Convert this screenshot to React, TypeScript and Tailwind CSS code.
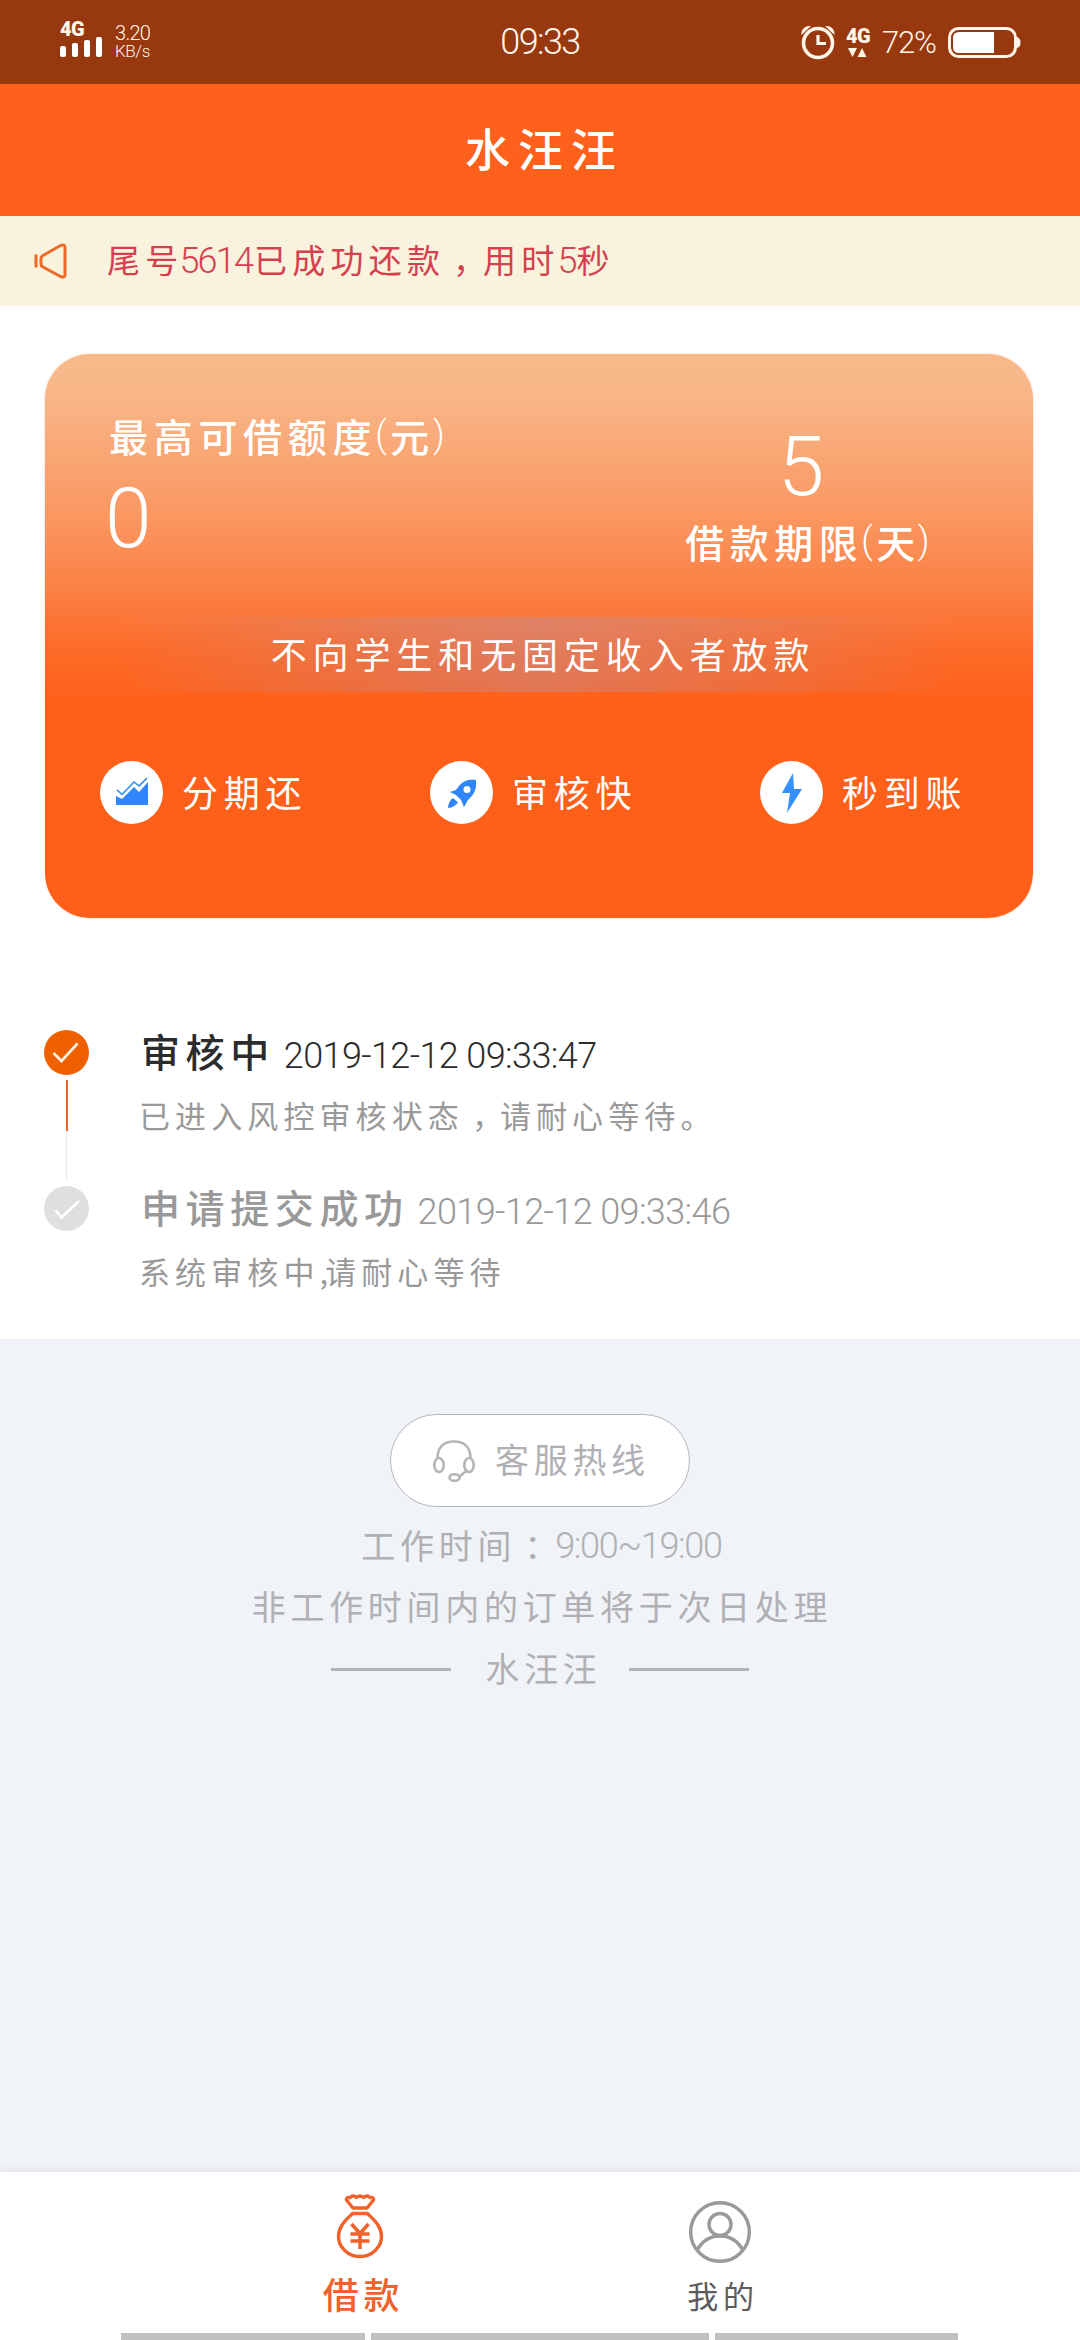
import React from "react";
import clsx from "clsx";

const steps = [
	{
		title: "审核中",
		time: "2019-12-12 09:33:47",
		active: true,
	},
	{
		title: "申请提交成功",
		time: "2019-12-12 09:33:46",
		active: false,
	},
];

// latin text and digits are thinner and narrower than the chinese around them
function Num({ className, children }: { className?: string; children: React.ReactNode }) {
	return (
		<span className={clsx("font-[Roboto,'Liberation_Sans',sans-serif] whitespace-pre", className)}>
			{children}
		</span>
	);
}

// full width punctuation sits in the middle of its cell
function Mark({ children }: { children: React.ReactNode }) {
	return <span className="pl-2 tracking-[-3px]">{children}</span>;
}

function StatusBar() {
	return (
		<div className="flex h-[84px] bg-[#97380f] text-[#fff6ea]">
			<div className="flex w-[400px] pl-[60px] pt-[21px]">
				<div className="w-[55px]">
					<div className="h-4 font-[Roboto,sans-serif] text-[20px] leading-4 font-black tracking-[-0.5px]">4G</div>
					<div className="flex items-end gap-[6px] h-5">
						<i className="w-[6px] h-[11px] rounded-[2px] bg-white" />
						<i className="w-[6px] h-[14px] rounded-[2px] bg-white" />
						<i className="w-[6px] h-[17px] rounded-[2px] bg-white" />
						<i className="w-[6px] h-[20px] rounded-[2px] bg-white" />
					</div>
				</div>
				<div className="flex flex-col pt-[3px]">
					<Num className="text-[20px] leading-[18px] font-light tracking-[-0.7px]">3.20</Num>
					<Num className="text-[17px] leading-[19px] font-light tracking-[-0.4px]">KB/s</Num>
				</div>
			</div>
			<div className="flex w-[280px] items-center justify-center">
				<Num className="text-[36px] leading-none font-light tracking-[-1.600px]">09:33</Num>
			</div>
			<div className="flex flex-1 items-center pl-[120px]">
				<svg className="w-[36px] h-[36px]" viewBox="0 0 36 36" fill="none" stroke="currentColor">
					<circle cx="18" cy="19" r="14.5" strokeWidth="3.6" />
					<path d="M18 11v8.5h8" strokeWidth="3.2" />
					<path d="M1.500 11C1 5 5 1.500 11 2L1.500 11zM34.500 11C35 5 31 1.500 25 2l9.500 9z" fill="currentColor" stroke="none" />
				</svg>
				<div className="ml-[10px] flex w-[36px] flex-col">
					<span className="h-[18px] font-[Roboto,sans-serif] text-[20px] leading-[18px] font-black tracking-[-0.5px]">4G</span>
					<svg className="ml-[2px] mt-[3px] w-[19px] h-[9px]" viewBox="0 0 19 9" fill="currentColor">
						<path d="M0 0h9L4.500 9zM9.500 9h9L14 0z" />
					</svg>
				</div>
				<Num className="w-[66px] text-[31px] leading-none font-light tracking-[-1.200px]">72%</Num>
				<svg className="w-[73px] h-[32px]" viewBox="0 0 73 32" fill="none">
					<rect x="1.500" y="2.500" width="66" height="28" rx="9" stroke="currentColor" strokeWidth="3" />
					<path d="M11 6h35v21H11q-6 0-6-6v-9q0-6 6-6z" fill="white" />
					<path d="M69 11q3.500 1 3.500 5.500T69 22z" fill="currentColor" />
				</svg>
			</div>
		</div>
	);
}

function Feature({ icon, label }: { icon: React.ReactNode; label: string }) {
	return (
		<div className="flex w-[330px] shrink-0 items-center pl-[55px]">
			<div className="flex w-[63px] h-[63px] items-center justify-center rounded-full bg-white">{icon}</div>
			<span className="ml-[19px] pb-1 text-[36px] leading-none tracking-[5.7px] whitespace-nowrap">{label}</span>
		</div>
	);
}

function LoanCard() {
	return (
		<div className="ml-[45px] mt-[48px] flex w-[988px] h-[564px] flex-col rounded-[45px] bg-[linear-gradient(180deg,#f8ba8b_0px,#f8b586_45px,#fa9660_165px,#fb8145_235px,#fd6b28_295px,#fe601a_350px,#fe601a_100%)] text-white shadow-[0_0_2px_#fbc6a6]">
			<div className="flex h-[263px]">
				<div className="w-[595px] pl-[64px] pt-[58px]">
					<div className="flex h-[46px] items-center text-[39px] leading-none font-medium tracking-[5.700px]">
						最高可借额度<Num className="-ml-[2px] w-[15px] text-[36px] font-light">(</Num>元<Num className="-ml-[2px] text-[36px] font-light">)</Num>
					</div>
					<Num className="mt-[21px] -ml-[4px] block text-[84px] leading-[80px] font-[350]">0</Num>
				</div>
				<div className="flex w-[340px] flex-col items-center pt-[73px]">
					<Num className="-ml-[18px] text-[84px] leading-[80px] font-[350]">5</Num>
					<div className="mt-[12px] flex h-[44px] items-center text-[39px] leading-none font-medium tracking-[5.500px]">
						借款期限<Num className="-ml-[2px] w-[15px] text-[36px] font-light">(</Num>天<Num className="-ml-[3px] w-[17px] text-[36px] font-light">)</Num>
					</div>
				</div>
			</div>
			<div className="mx-[75px] flex h-[75px] items-center justify-center bg-[linear-gradient(90deg,transparent,rgba(170,155,192,0.35)_50%,transparent)]">
				<span className="pl-[8px] pb-1 text-[36px] leading-none tracking-[5.900px] whitespace-nowrap">不向学生和无固定收入者放款</span>
			</div>
			<div className="mt-[69px] flex">
				<Feature
					label="分期还"
					icon={
						<svg className="mb-[3px] w-[34px] h-[30px]" viewBox="0 0 34 30" fill="#2f86fb">
							<path d="M1 20l6 3L19 11l5 5 9-10v23H1z" />
							<path d="M2 14l5 4.500L19 6l5 4L32 2" fill="none" stroke="#2f86fb" strokeWidth="1.600" />
						</svg>
					}
				/>
				<Feature
					label="审核快"
					icon={
						<svg className="mt-[3px] w-[30px] h-[30px]" viewBox="0 0 30 30">
							<path
								fill="#2f86fb"
								fillRule="evenodd"
								d="M29 1C22 0 17 1 12 7L9 11 3 13l6 3 5 5 3 7 4-7C27 16 30 10 29 1zM20 7a3.500 3.500 0 1 1 0 7 3.500 3.500 0 0 1 0-7z"
							/>
							<path fill="#2f86fb" d="M6 19l5 4.500C9 26 5 29 1 29c0-4 2-8 5-10z" />
						</svg>
					}
				/>
				<Feature
					label="秒到账"
					icon={
						<svg className="w-[20px] h-[40px]" viewBox="0 0 20 40" fill="#3490fd">
							<path d="M11 0L0 20h8L5 40l15-24h-8z" />
						</svg>
					}
				/>
			</div>
		</div>
	);
}

function StepIcon({ active }: { active: boolean }) {
	return (
		<svg className="w-[45px] h-[45px]" viewBox="0 0 45 45" fill="none">
			<circle cx="22.500" cy="22.500" r="22.500" fill={active ? "#ee6000" : "#dfdfdf"} />
			<path
				d={active ? "M9.500 23l8 8L33.500 13.500" : "M11.500 24l6 7.500L35 15"}
				stroke={active ? "#fff0e0" : "#fff"}
				strokeWidth="2.600"
			/>
		</svg>
	);
}

function Progress() {
	return (
		<div className="mt-[112px] flex h-[309px] pl-[44px]">
			<div className="flex w-[45px] flex-col items-center">
				<StepIcon active />
				<div className="mt-[5px] w-[2px] h-[51px] bg-[#ea5f2a]" />
				<div className="mb-[5px] w-px h-[50px] bg-[#eaeaea]" />
				<StepIcon active={false} />
			</div>
			<div className="ml-[50px]">
				{steps.map((step) => (
					<div key={step.title} className={clsx("h-[156px]", step.active ? "text-[#2c2c2c]" : "text-[#999]")}>
						<div className="flex h-[46px] items-center whitespace-nowrap">
							<span className="ml-[2px] pb-[5px] text-[39px] leading-none font-medium tracking-[5.600px]">{step.title}</span>
							<Num className="ml-[9px] mt-[5px] text-[36px] leading-none font-light tracking-[-0.600px]">{step.time}</Num>
						</div>
						<div className="mt-[16px] flex h-[44px] items-center text-[31px] leading-none tracking-[5.100px] text-[#999] whitespace-nowrap">
							{step.active ? <>已进入风控审核状态<Mark>，</Mark>请耐心等待。</> : <>系统审核中<span className="tracking-[-3px]">,</span>请耐心等待</>}
						</div>
					</div>
				))}
			</div>
		</div>
	);
}

function Service() {
	return (
		<div className="flex flex-1 flex-col items-center border-t border-[#ececef] bg-[#f0f3f7] pt-[74px] text-[34px] leading-none tracking-[4.700px] text-[#b0b0b4]">
			<div className="flex w-[300px] h-[93px] items-center rounded-full border border-[#b4b4ba] bg-white pl-[42px]">
				<svg className="w-[42px] h-[42px]" viewBox="0 0 42 42" fill="none" stroke="#b5b5b5" strokeWidth="2.600">
					<path d="M4.500 18C4.500 7 11 1.500 21 1.500S37.500 7 37.500 18" />
					<ellipse cx="6" cy="25" rx="4.700" ry="7" />
					<ellipse cx="36" cy="25" rx="4.700" ry="7" />
					<path d="M33 31l-7 6" />
					<ellipse cx="21.500" cy="37.500" rx="5" ry="3.300" />
				</svg>
				<span className="ml-[20px] pb-[3px] whitespace-nowrap">客服热线</span>
			</div>
			<div className="flex h-[76px] items-center pl-[3px]">
				工作时间<Mark>：</Mark><Num className="mt-[2px] text-[36px] font-light tracking-[-1.300px]">9:00~19:00</Num>
			</div>
			<div className="flex h-[46px] items-center pl-[4px]">非工作时间内的订单将于次日处理</div>
			<div className="mt-[17px] flex h-[46px] items-center">
				<i className="w-[120px] h-[3px] bg-[#b2b2b8]" />
				<span className="ml-[34px] mr-[27px] pb-[2px]">水汪汪</span>
				<i className="w-[120px] h-[3px] bg-[#b2b2b8]" />
			</div>
		</div>
	);
}

function TabBar() {
	return (
		<div className="flex h-[168px] flex-col bg-white shadow-[0_-2px_6px_#e4e4ea]">
			<div className="flex h-[161px] px-[180px]">
				<div className="flex w-[360px] flex-col items-center pt-[22px] text-[#f0622a]">
					<svg className="w-[48px] h-[66px]" viewBox="0 0 48 66" fill="none" stroke="currentColor" strokeWidth="3.400" strokeLinejoin="round" strokeLinecap="round">
						<path d="M17 14L10.500 6Q10 3 14 3.500q3-3 6.500 0 3.500-3 7 0 4-3 6.500 0 4-.500 3.500 2.500L31 14z" />
						<path d="M16.500 19.500h15C38 26 45.500 32 45.500 42.500S36 62.500 24 62.500 2.500 53 2.500 42.500 10 26 16.500 19.500z" />
						<path d="M15.500 30L24 39.500 32.500 30M24 39.500V55M14.500 40h19M14.500 47h19" strokeLinecap="butt" />
					</svg>
					<span className="mt-[15px] pl-[7px] text-[36px] leading-none font-medium tracking-[4.700px]">借款</span>
				</div>
				<div className="flex w-[360px] flex-col items-center pt-[29px] text-[#5c5c5c]">
					<svg className="w-[62px] h-[62px]" viewBox="0 0 62 62" fill="none" stroke="#9a9a9a" strokeWidth="3.400">
						<circle cx="31" cy="31" r="29.300" />
						<circle cx="31" cy="23.500" r="11" />
						<path d="M8 49.500C13 40 21 35 31 35s18 5 23 14.500" />
					</svg>
					<span className="mt-[16px] pl-[6px] text-[31px] leading-none tracking-[4.700px]">我的</span>
				</div>
			</div>
			<div className="flex h-[7px] gap-[6px] pl-[121px]">
				<i className="w-[244px] bg-[#c1c1c1]" />
				<i className="w-[338px] bg-[#c1c1c1]" />
				<i className="w-[243px] bg-[#c1c1c1]" />
			</div>
		</div>
	);
}

function App() {
	return (
		<div className="flex w-[1080px] h-[2340px] flex-col overflow-hidden bg-white font-['Noto_Sans_CJK_SC',sans-serif]">
			<StatusBar />
			<div className="flex h-[132px] items-center justify-center bg-[#ff601b] pl-[9px] pb-[6px] text-[45px] leading-none font-medium tracking-[8px] text-white">
				水汪汪
			</div>
			<div className="flex h-[90px] items-center bg-[#f9f2dd] pl-[34px] text-[33px] leading-none tracking-[5.200px] text-[#d5404e]">
				<svg className="w-[34px] h-[36px]" viewBox="0 0 34 36" fill="none" stroke="#ee6a28" strokeWidth="3">
					<path d="M9 12.500L26.500 2.500Q31 1 31 4v28q0 3-4.500 1.500L9 24q-2-1-2-3v-5.500q0-2 2-3zM2 11.500v13" strokeLinejoin="round" />
				</svg>
				<span className="ml-[39px] whitespace-nowrap">尾号<Num className="-ml-[4px] text-[36px] leading-none font-light tracking-[-1.800px]">5614</Num></span>
				<span className="ml-[2px] whitespace-nowrap">已成功还款<Mark>，</Mark>用时<Num className="-ml-[2px] text-[36px] leading-none font-light tracking-[-1px]">5</Num>秒</span>
			</div>
			<LoanCard />
			<Progress />
			<Service />
			<TabBar />
		</div>
	);
}

export default App;
